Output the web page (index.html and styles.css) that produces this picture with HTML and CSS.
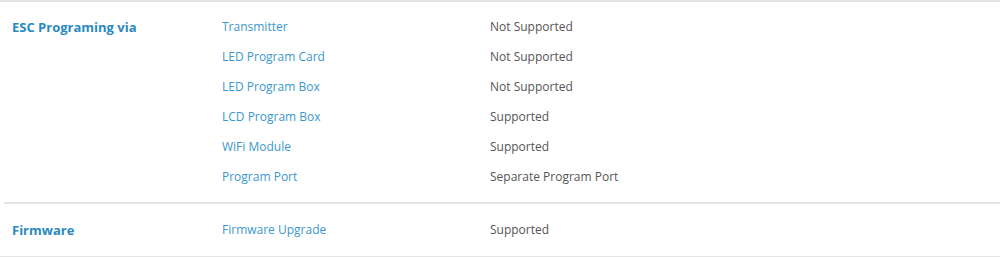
FILE: index.html
```html
<!DOCTYPE html>
<html lang="en">

<head>
    <meta charset="UTF-8">
    <meta name="viewport" content="width=device-width, initial-scale=1.0">
    <link rel="stylesheet" href="styles.css">
    <title>ESC Specifications</title>
</head>

<body>
    <div class="specTable">
        <div class="specGroup first">
            <div class="groupName">ESC Programing via</div>
            <div class="groupRows">
                <div class="specRow">
                    <div class="specKey">Transmitter</div>
                    <div class="specValue">Not Supported</div>
                </div>
                <div class="specRow">
                    <div class="specKey">LED Program Card</div>
                    <div class="specValue">Not Supported</div>
                </div>
                <div class="specRow">
                    <div class="specKey">LED Program Box</div>
                    <div class="specValue">Not Supported</div>
                </div>
                <div class="specRow">
                    <div class="specKey">LCD Program Box</div>
                    <div class="specValue">Supported</div>
                </div>
                <div class="specRow">
                    <div class="specKey">WiFi Module</div>
                    <div class="specValue">Supported</div>
                </div>
                <div class="specRow">
                    <div class="specKey">Program Port</div>
                    <div class="specValue">Separate Program Port</div>
                </div>
            </div>
        </div>
        <div class="specGroup">
            <div class="groupName">Firmware</div>
            <div class="groupRows">
                <div class="specRow">
                    <div class="specKey">Firmware Upgrade</div>
                    <div class="specValue">Supported</div>
                </div>
            </div>
        </div>
    </div>
</body>

</html>
```

FILE: styles.css
```css
body {
    background-color: #ffffff;
    margin: 0;
    padding: 0;
    font-family: 'Open Sans', 'Noto Sans', sans-serif;
    font-size: 12px;
}

.specTable {
    width: 1000px;
    border-bottom: 2px solid #e4e4e4;
}

.specGroup {
    display: flex;
    flex-direction: row;
    margin-left: 4px;
    padding: 11px 0 11px 0;
    border-top: 2px solid #e4e4e4;
}

.specGroup.first {
    margin-left: 0;
    padding-top: 10px;
    padding-bottom: 10px;
    padding-left: 4px;
}

.groupName {
    width: 210px;
    padding-left: 8px;
    line-height: 30px;
    font-size: 13px;
    font-weight: bold;
    color: #2a89c0;
}

.groupRows {
    display: flex;
    flex-direction: column;
}

.specRow {
    display: flex;
    flex-direction: row;
    height: 30px;
    line-height: 30px;
}

.specKey {
    width: 268px;
    color: #3a97cf;
}

.specValue {
    color: #555555;
}
```
